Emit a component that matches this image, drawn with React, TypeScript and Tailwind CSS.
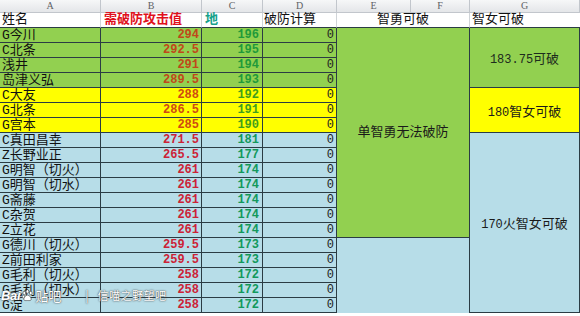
import React from "react";

type Bg = "g" | "y" | "b";
const rows: [string, string, string, Bg][] = [
  ["G今川", "294", "196", "g"],
  ["C北条", "292.5", "195", "g"],
  ["浅井", "291", "194", "g"],
  ["岛津义弘", "289.5", "193", "g"],
  ["C大友", "288", "192", "y"],
  ["G北条", "286.5", "191", "y"],
  ["G宫本", "285", "190", "y"],
  ["C真田昌幸", "271.5", "181", "b"],
  ["Z长野业正", "265.5", "177", "b"],
  ["G明智（切火）", "261", "174", "b"],
  ["G明智（切水）", "261", "174", "b"],
  ["G斋藤", "261", "174", "b"],
  ["C杂贺", "261", "174", "b"],
  ["Z立花", "261", "174", "b"],
  ["G德川（切火）", "259.5", "173", "b"],
  ["Z前田利家", "259.5", "173", "b"],
  ["G毛利（切火）", "258", "172", "b"],
  ["G毛利（切水）", "258", "172", "b"],
  ["G淀", "258", "172", "b"],
];

const bgCls: Record<Bg, string> = {
  g: "bg-[#92d050]",
  y: "bg-[#ffff00]",
  b: "bg-[#b7dde8]",
};
const redCls: Record<Bg, string> = {
  g: "text-[#c0481a]",
  y: "text-[#d04a10]",
  b: "text-[#cc2236]",
};
const greenCls: Record<Bg, string> = {
  g: "text-[#1f9a3a]",
  y: "text-[#3f9e1c]",
  b: "text-[#12995c]",
};

const mono = "font-['Liberation_Mono','Noto_Sans_CJK_SC',monospace]";
const cjk = "font-['Liberation_Mono','Noto_Sans_CJK_SC',sans-serif]";
const cell = "border-r border-b border-[#2b3c44] overflow-hidden whitespace-nowrap";

function Mixed({ num, text }: { num: string; text: string }) {
  return (
    <div className="leading-none whitespace-nowrap">
      <span className={`${mono} text-[12px]`}>{num}</span>
      <span className="font-['Noto_Sans_CJK_SC',sans-serif] text-[13px]">{text}</span>
    </div>
  );
}

export default function App() {
  return (
    <div className="relative w-[580px] h-[316px] overflow-hidden bg-white">
      <div className="grid grid-cols-[101px_101px_61px_74px_74px_59px_110px] grid-rows-[13px_15px_repeat(19,15px)]">
        {/* merged cells placed explicitly */}
        <div className={`col-start-5 col-span-2 row-start-3 row-span-14 ${cell} bg-[#92d050] flex items-center justify-center text-[13px] text-[#1a1a1a] ${cjk}`}>
          单智勇无法破防
        </div>
        <div className="col-start-5 col-span-2 row-start-17 row-span-5 border-r border-[#2b3c44] bg-[#b7dde8]" />
        <div className={`col-start-7 row-start-3 row-span-4 ${cell} bg-[#92d050] flex items-center justify-center text-[#1d2b1d]`}>
          <Mixed num="183.75" text="可破" />
        </div>
        <div className={`col-start-7 row-start-7 row-span-3 ${cell} bg-[#ffff00] flex items-center justify-center text-[#1a1a1a]`}>
          <Mixed num="180" text="智女可破" />
        </div>
        <div className={`col-start-7 row-start-10 row-span-12 ${cell} bg-[#b7dde8] flex items-center justify-center text-[#1a1a1a]`}>
          <Mixed num="170" text="火智女可破" />
        </div>

        {/* column letters */}
        {["A", "B", "C", "D", "E", "F", "G"].map((l) => (
          <div
            key={l}
            className="row-start-1 bg-gradient-to-b from-[#f6f7f8] to-[#e4e6e9] border-r border-b border-[#c2c6cc] flex items-center justify-center text-[10px] leading-none text-[#5e6266] font-['Liberation_Serif',serif]"
          >
            {l}
          </div>
        ))}

        {/* labels */}
        <div className={`row-start-2 col-start-1 border-r border-[#d0d4d8] border-b border-b-[#2b3c44] flex items-center pl-[2px] text-[13px] text-[#111] ${cjk}`}>姓名</div>
        <div className={`row-start-2 col-start-2 border-r border-[#d0d4d8] border-b border-b-[#2b3c44] flex items-center pl-[3px] text-[13px] font-bold text-[#e0101c] ${cjk}`}>需破防攻击值</div>
        <div className={`row-start-2 col-start-3 border-r border-[#d0d4d8] border-b border-b-[#2b3c44] flex items-center pl-[3px] text-[13px] font-bold text-[#15a08a] ${cjk}`}>地</div>
        <div className={`row-start-2 col-start-4 border-r border-[#d0d4d8] border-b border-b-[#2b3c44] flex items-center pl-[1px] text-[13px] text-[#111] ${cjk}`}>破防计算</div>
        <div className={`row-start-2 col-start-5 col-span-2 border-r border-[#d0d4d8] border-b border-b-[#2b3c44] flex items-center justify-center text-[13px] text-[#111] ${cjk}`}>智勇可破</div>
        <div className={`row-start-2 col-start-7 border-b border-b-[#2b3c44] flex items-center pl-[2px] text-[13px] text-[#111] ${cjk}`}>智女可破</div>

        {/* data rows */}
        {rows.map(([name, atk, di, bg], i) => (
          <React.Fragment key={i}>
            <div className={`col-start-1 ${cell} ${bgCls[bg]} flex items-center pl-[2px] text-[13px] leading-none text-[#111] ${cjk}`}>{name}</div>
            <div className={`col-start-2 ${cell} ${bgCls[bg]} ${redCls[bg]} flex items-center justify-end pr-[2px] text-[12px] leading-none font-bold ${mono}`}>{atk}</div>
            <div className={`col-start-3 ${cell} ${bgCls[bg]} ${greenCls[bg]} flex items-center justify-end pr-[3px] text-[12px] leading-none font-bold ${mono}`}>{di}</div>
            <div className={`col-start-4 ${cell} ${bgCls[bg]} flex items-center justify-end pr-[2px] text-[12px] leading-none text-[#222] ${mono}`}>0</div>
          </React.Fragment>
        ))}
      </div>

      {/* watermark overlay */}
      <div className="absolute left-[1px] top-[288px] h-[14px] flex items-center text-white [text-shadow:0_0_1px_#555,0_0_2px_rgba(60,60,60,0.9)] font-['Noto_Sans_CJK_SC',sans-serif] pointer-events-none leading-none">
        <span className="text-[13px] font-bold italic font-['Liberation_Sans',sans-serif] tracking-tight">Bai</span>
        <svg width="13" height="13" viewBox="0 0 16 16" className="ml-[1px]">
          <g fill="white" stroke="#555" strokeWidth="0.9">
            <ellipse cx="4" cy="5" rx="1.7" ry="2.2" />
            <ellipse cx="8" cy="3" rx="1.7" ry="2.2" />
            <ellipse cx="12" cy="5" rx="1.7" ry="2.2" />
            <ellipse cx="3" cy="9.5" rx="1.5" ry="1.9" />
            <path d="M8 7.5c2.5 0 5 3.5 4.5 5.5-.4 1.6-2.5 1.2-4.5 1.2s-4.1.4-4.5-1.2C3 11 5.5 7.5 8 7.5z" />
          </g>
        </svg>
        <span className="text-[13px] ml-[1px]">贴吧</span>
        <span className="text-[12px] ml-[24px] mr-[9px]">|</span>
        <span className="text-[11px] tracking-[0.5px]">信喵之野望吧</span>
      </div>
    </div>
  );
}
